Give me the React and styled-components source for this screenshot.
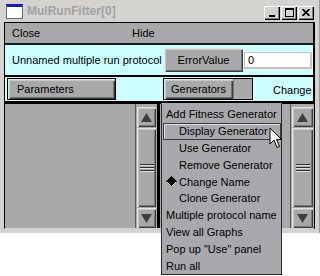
import React from "react";
import styled, { createGlobalStyle } from "styled-components";

const GlobalStyle = createGlobalStyle`
  body {
    margin: 0;
    background: #fff;
    font-family: "Liberation Sans", Arial, sans-serif;
  }
`;

const Page = styled.div`
  position: relative;
  width: 320px;
  height: 276px;
  overflow: hidden;
  background: #fff;
  font-size: 11px;
  color: #000;
`;

const Window = styled.div`
  width: 320px;
  box-sizing: border-box;
  background: #d5d3cf;
  padding: 0 4px 4px 4px;
  border-right: 1px solid #9a9a9a;
`;

const TitleBar = styled.div`
  height: 22px;
  display: flex;
  align-items: center;
`;

const AppIcon = styled.div`
  width: 15px;
  height: 11px;
  margin: 0 4px 0 2px;
  background: #fff;
  border: 1px solid #6a6a6a;
  border-top: 3px solid #1020c0;
`;

const Title = styled.div`
  flex: 1;
  font-size: 12px;
  font-weight: bold;
  color: #a2a2a2;
`;

const CapButtons = styled.div`
  display: flex;
  gap: 1px;
  margin-right: 1px;
  margin-top: 3px;
`;

const CapButton = styled.div`
  width: 16px;
  height: 14px;
  box-sizing: border-box;
  background: #d5d3cf;
  box-shadow: inset 1px 1px #fff, inset -1px -1px #000, inset -2px -2px #808080;
  display: flex;
  align-items: center;
  justify-content: center;
`;

const Body = styled.div`
  border-left: 1px solid #000;
  border-right: 2px solid #000;
  border-top: 1px solid #000;
  border-bottom: 1px solid #d5d3cf;
`;

const MenuBar = styled.div`
  height: 20px;
  display: grid;
  grid-template-columns: 120px auto;
  align-items: center;
  padding-left: 7px;
  background: #a9a9ab;
  border-bottom: 2px solid #1a1a1a;
`;

const Row = styled.div`
  display: flex;
  align-items: ${(p) => (p.$top ? "flex-start" : "center")};
  height: ${(p) => p.$h}px;
  background: #ccffff;
  border-bottom: ${(p) => p.$line}px solid #000;
  white-space: nowrap;
  overflow: hidden;
`;

const Label = styled.div`
  flex: 0 0 ${(p) => p.$w}px;
  padding-left: ${(p) => p.$pad}px;
`;

const Cell = styled.div`
  flex: 0 0 ${(p) => p.$w}px;
  display: flex;
  padding-top: 1px;
`;

const Button = styled.div`
  width: ${(p) => p.$w}px;
  height: ${(p) => p.$h}px;
  margin-left: ${(p) => p.$ml || 0}px;
  box-sizing: border-box;
  background: #a9a9ab;
  display: flex;
  align-items: center;
  justify-content: ${(p) => (p.$left ? "flex-start" : "center")};
  padding-left: ${(p) => (p.$left ? 9 : 0)}px;
  box-shadow: inset 1px 1px #e6e6e6, inset 2px 2px #c8c8c8, inset -1px -1px #3c3c3c,
    inset -2px -2px #707070;
  ${(p) => p.$outlined && "border: 1px solid #000;"}
`;

const Field = styled.div`
  width: 68px;
  height: 17px;
  margin-left: 1px;
  box-sizing: border-box;
  background: #fff;
  border: 1px solid #d9b8b8;
  border-right-width: 2px;
  border-bottom-width: 2px;
  padding-left: 3px;
  line-height: 14px;
`;

const Combo = styled.div`
  display: flex;
  width: 90px;
  height: 22px;
  margin-left: 3px;
  box-sizing: border-box;
  border: 1px solid #000;
  background: #a9a9ab;
`;

const ComboArrow = styled.div`
  flex: 1;
  background: #a9a9ab;
  box-shadow: inset 1px 0 #777;
`;

const Trail = styled.div`
  flex: 1;
  min-width: 0;
  overflow: hidden;
  margin-left: 3px;
  padding-top: 7px;
`;

const Panels = styled.div`
  display: flex;
  height: 124px;
`;

const List = styled.div`
  flex: 0 0 ${(p) => p.$w}px;
  background: #a9a9ab;
`;

const Divider = styled.div`
  flex: 0 0 3px;
  background: #000;
`;

const ScrollBar = styled.div`
  flex: 0 0 ${(p) => p.$w}px;
  box-sizing: border-box;
  display: flex;
  flex-direction: column;
  gap: 1px;
  padding: 3px 1px 0 1px;
  background: #a9a9ab;
  border-left: 1px solid #5a5a5a;
`;

const Bevel = styled.div`
  height: ${(p) => (p.$h ? `${p.$h}px` : "auto")};
  flex: ${(p) => (p.$h ? "none" : 1)};
  background: #a9a9ab;
  display: flex;
  flex-direction: column;
  align-items: center;
  justify-content: center;
  gap: 2px;
  box-shadow: inset 1px 1px #e4e4e4, inset 2px 2px #c4c4c4, inset -1px -1px #404040,
    inset -2px -2px #787878;
`;

const Grip = styled.div`
  width: 14px;
  height: 1px;
  background: #303030;
  box-shadow: 0 1px #e0e0e0;
`;

const PopMenu = styled.div`
  position: absolute;
  left: 161px;
  top: 103px;
  width: 121px;
  box-sizing: border-box;
  padding: 2px 0 0 0;
  background: #a9a9ad;
  border: 1px solid #2a2a2a;
  border-top-color: #a9a9ad;
`;

const Item = styled.div`
  display: flex;
  align-items: center;
  height: 16.8px;
  box-sizing: border-box;
  margin-left: 1px;
  padding-left: 2px;
  white-space: nowrap;
  border: 1px solid ${(p) => (p.$active ? "#3a3a3a" : "transparent")};
  box-shadow: ${(p) => (p.$active ? "inset 1px 1px #e0e0e0" : "none")};
`;

const Marker = styled.span`
  flex: 0 0 13px;
  display: flex;
  align-items: center;
`;

const Cursor = styled.svg`
  position: absolute;
  left: 269px;
  top: 127px;
`;

const TriUp = () => (
  <svg width="11" height="9" viewBox="0 0 11 9">
    <path d="M5.5 0 L11 9 L0 9 Z" fill="#404040" />
  </svg>
);

const TriDown = () => (
  <svg width="11" height="9" viewBox="0 0 11 9">
    <path d="M0 0 L11 0 L5.5 9 Z" fill="#404040" />
  </svg>
);

const Scroll = ({ w }) => (
  <ScrollBar $w={w}>
    <Bevel $h={20}>
      <TriUp />
    </Bevel>
    <Bevel>
      <Grip />
      <Grip />
      <Grip />
    </Bevel>
    <Bevel $h={20}>
      <TriDown />
    </Bevel>
  </ScrollBar>
);

const menuItems = [
  { text: "Add Fitness Generator" },
  { text: "Display Generator", indent: true, active: true },
  { text: "Use Generator", indent: true },
  { text: "Remove Generator", indent: true },
  { text: "Change Name", indent: true, mark: true },
  { text: "Clone Generator", indent: true },
  { text: "Multiple protocol name" },
  { text: "View all Graphs" },
  { text: 'Pop up "Use" panel' },
  { text: "Run all" },
];

const App = () => (
  <Page>
    <GlobalStyle />
    <Window>
      <TitleBar>
        <AppIcon />
        <Title>MulRunFitter[0]</Title>
        <CapButtons>
          <CapButton>
            <svg width="8" height="8" viewBox="0 0 8 8">
              <rect x="1" y="6" width="6" height="2" fill="#000" />
            </svg>
          </CapButton>
          <CapButton>
            <svg width="9" height="9" viewBox="0 0 9 9">
              <rect x="0.5" y="0.5" width="8" height="8" fill="none" stroke="#000" />
              <rect x="0" y="0" width="9" height="2" fill="#000" />
            </svg>
          </CapButton>
          <CapButton>
            <svg width="8" height="7" viewBox="0 0 8 7">
              <path d="M0.5 0 L7.5 7 M7.5 0 L0.5 7" stroke="#000" strokeWidth="1.6" />
            </svg>
          </CapButton>
        </CapButtons>
      </TitleBar>
      <Body>
        <MenuBar>
          <span>Close</span>
          <span>Hide</span>
        </MenuBar>
        <Row $h={30} $line={2}>
          <Label $w={152} $pad={7}>
            Unnamed multiple run protocol
          </Label>
          <Button $w={79} $h={24}>
            ErrorValue
          </Button>
          <Field>0</Field>
        </Row>
        <Row $h={24} $line={3} $top>
          <Cell $w={155}>
            <Button $w={109} $h={22} $ml={2} $left $outlined>
              Parameters
            </Button>
          </Cell>
          <Cell $w={110}>
            <Combo>
              <Button $w={69} $h={20}>
                Generators
              </Button>
              <ComboArrow />
            </Combo>
          </Cell>
          <Trail>Change Name</Trail>
        </Row>
        <Panels>
          <List $w={130} />
          <Scroll w={22} />
          <Divider />
          <List $w={130} />
          <Scroll w={24} />
        </Panels>
      </Body>
    </Window>
    <PopMenu>
      {menuItems.map((it) => (
        <Item key={it.text} $active={it.active}>
          {it.indent && (
            <Marker>
              {it.mark && (
                <svg width="11" height="11" viewBox="0 0 11 11">
                  <path d="M5.5 0 L11 5.5 L5.5 11 L0 5.5 Z" fill="#000" />
                  <path d="M1 6 L5.5 10.5 L10 6" fill="none" stroke="#e8e8e8" strokeWidth="1" />
                </svg>
              )}
            </Marker>
          )}
          {it.text}
        </Item>
      ))}
    </PopMenu>
    <Cursor width="14" height="23" viewBox="0 0 14 23">
      <path
        d="M1 1 L1 17 L5 13 L8 20.5 L10.5 19.5 L7.5 12.5 L12.5 12.5 Z"
        fill="#fff"
        stroke="#000"
        strokeWidth="1"
        strokeLinejoin="miter"
      />
    </Cursor>
  </Page>
);

export default App;
